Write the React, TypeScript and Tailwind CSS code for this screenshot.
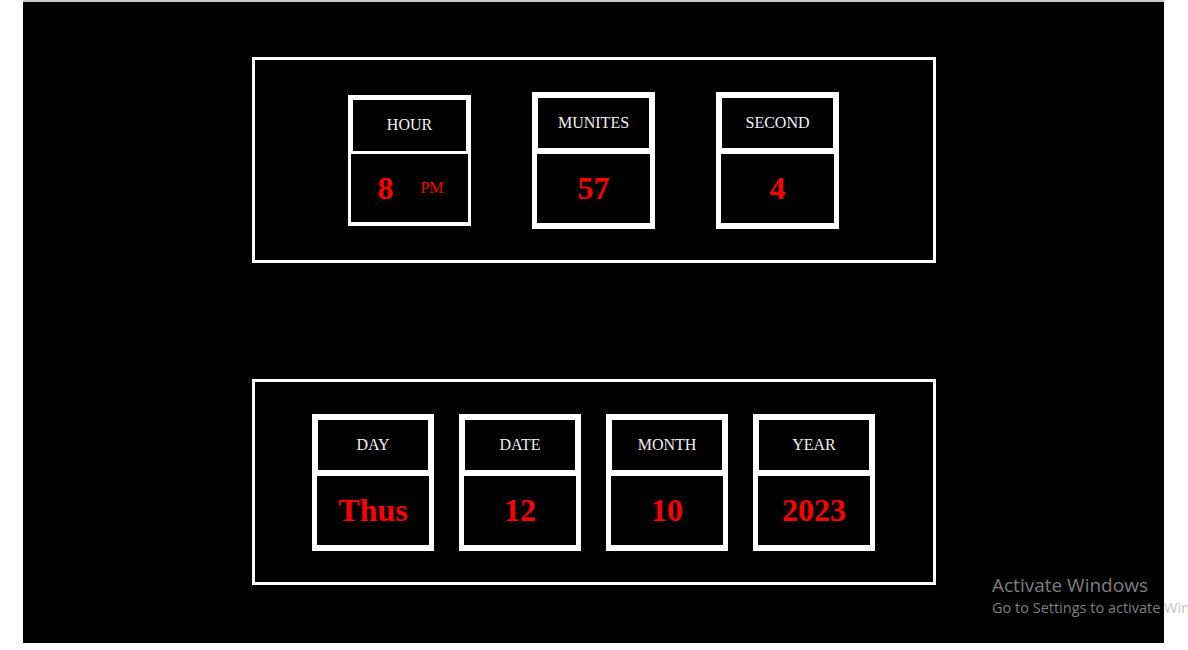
import React from "react"

interface IPropsCard {
  label: string
  thin?: boolean
  width: string
  children: React.ReactNode
}

const serif = { fontFamily: '"Liberation Serif", "Times New Roman", serif' }

const TimeCard: React.FC<IPropsCard> = ({ label, thin, width, children }) => {
  if (thin) {
    return (
      <div className={`${width} bg-white pt-[5px] px-[3px] pb-[4px] flex flex-col gap-[3px]`}>
        <div className="mx-[2px] h-[51px] bg-black flex items-center justify-center text-[16px] text-[#f2f2f2]">
          {label}
        </div>
        <div className="h-[68px] bg-black flex items-center justify-center">{children}</div>
      </div>
    )
  }

  return (
    <div className={`${width} bg-white pt-[6px] px-[5px] pb-[6px] flex flex-col gap-[6px]`}>
      <div className="mx-[1px] h-[50px] bg-black flex items-center justify-center text-[16px] text-[#f2f2f2]">
        {label}
      </div>
      <div className="h-[69px] bg-black flex items-center justify-center">{children}</div>
    </div>
  )
}

const Value: React.FC<{ text: string }> = ({ text }) => (
  <span className="text-[32px] font-bold text-[#f00] leading-none">{text}</span>
)

export default function App() {
  return (
    <div className="relative w-[1188px] h-[650px] bg-white overflow-hidden" style={serif}>
      <div className="ml-[23px] w-[1141px] h-[643px] bg-black border-t-2 border-[#c8c8c8] flex flex-col items-center pt-[55px] gap-[116px]">
        {/* time */}
        <div className="w-[684px] h-[206px] border-[3px] border-white flex items-center justify-center gap-[61px]">
          <TimeCard label="HOUR" thin width="w-[123px]">
            <div className="flex items-center gap-[27px] ml-[2px]">
              <Value text="8" />
              <span className="text-[16px] text-[#f00]">PM</span>
            </div>
          </TimeCard>
          <TimeCard label="MUNITES" width="w-[123px]">
            <Value text="57" />
          </TimeCard>
          <TimeCard label="SECOND" width="w-[123px]">
            <Value text="4" />
          </TimeCard>
        </div>

        {/* date */}
        <div className="w-[684px] h-[206px] border-[3px] border-white flex items-center justify-center gap-[25px]">
          <TimeCard label="DAY" width="w-[122px]">
            <Value text="Thus" />
          </TimeCard>
          <TimeCard label="DATE" width="w-[122px]">
            <Value text="12" />
          </TimeCard>
          <TimeCard label="MONTH" width="w-[122px]">
            <Value text="10" />
          </TimeCard>
          <TimeCard label="YEAR" width="w-[122px]">
            <Value text="2023" />
          </TimeCard>
        </div>
      </div>

      {/* windows watermark */}
      <div
        className="absolute left-[992px] top-[573px] whitespace-nowrap text-[rgba(170,170,170,0.75)]"
        style={{ fontFamily: '"Open Sans", "Noto Sans", sans-serif' }}
      >
        <div className="text-[19px] leading-[25px]">Activate Windows</div>
        <div className="text-[14.5px] leading-[20px]">Go to Settings to activate Windows.</div>
      </div>
    </div>
  )
}
